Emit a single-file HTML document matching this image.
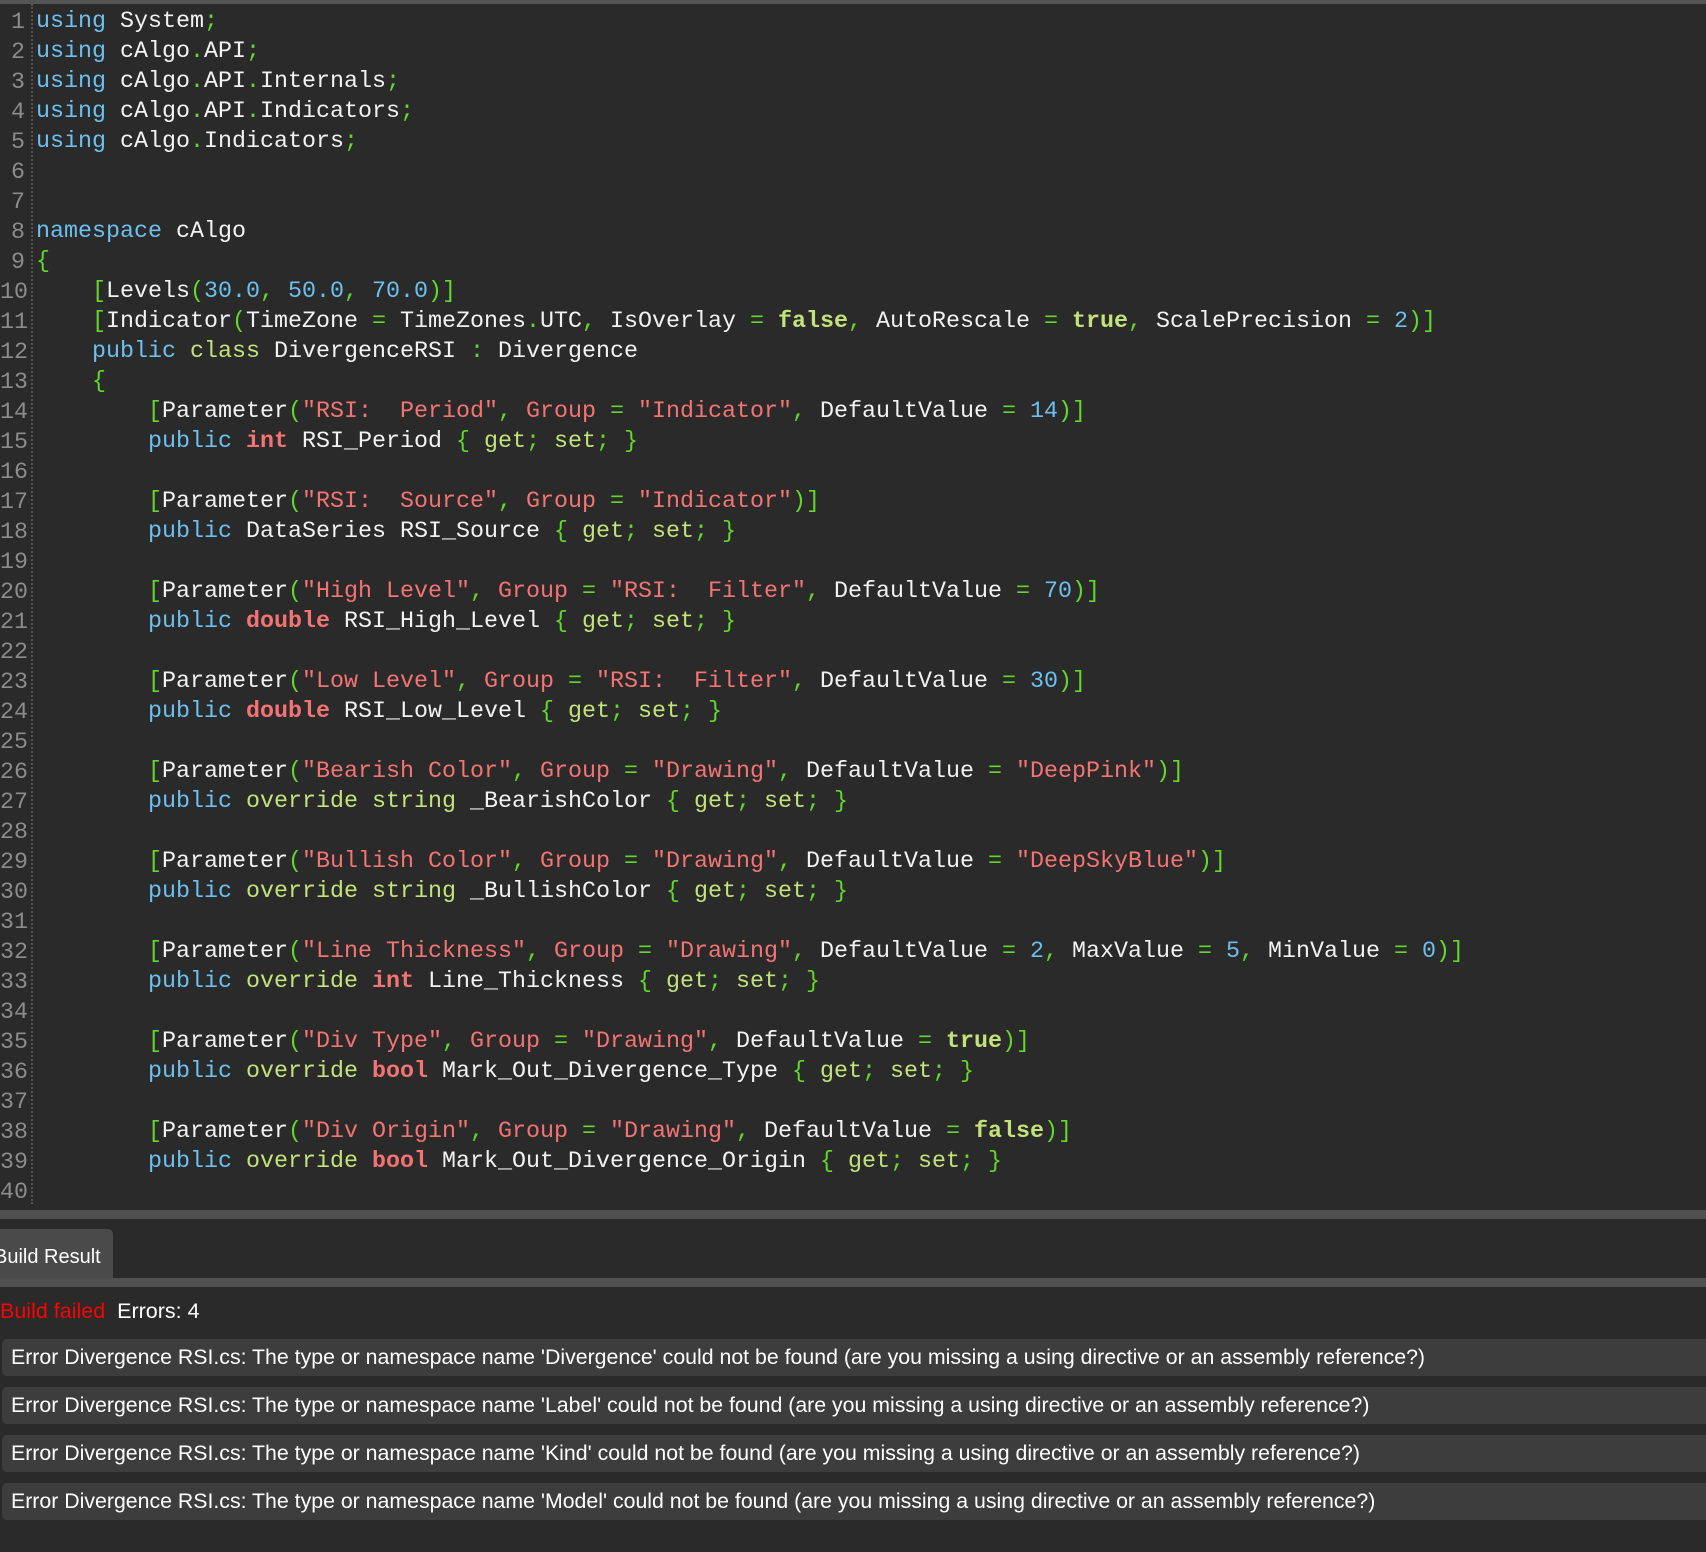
<!DOCTYPE html>
<html><head><meta charset="utf-8"><style>
html,body{margin:0;padding:0}
body{width:1706px;height:1552px;background:#2a2a2a;position:relative;overflow:hidden;font-family:"Liberation Mono",monospace}
.top{position:absolute;left:0;top:0;width:1706px;height:4px;background:#555}
.gut{position:absolute;left:31px;top:4px;height:1200px;border-left:2px dotted #555}
.ln{position:absolute;left:0;width:25px;text-align:right;color:#8c8c8c;font-size:23.3px;height:30px;line-height:30px;white-space:pre;margin-top:2px}
.code{position:absolute;left:36px;top:7px;font-size:23.33px;line-height:30px;color:#f2f2f2;white-space:pre}
.k{color:#6cc0f0}.y{color:#c3e27a}.t{color:#f47373;font-weight:bold}.s{color:#f47373}.n{color:#6cc0f0}.p{color:#62d82a}.b{color:#c3e27a;font-weight:bold}
.bar{position:absolute;left:0;width:1706px;height:9px;background:#505050}
.tab{position:absolute;left:0;top:1229px;width:113px;height:49px;background:#4a4a4a;border-radius:0 5px 0 0;color:#fff;font:20px "Liberation Sans",sans-serif;line-height:56px;text-indent:-6px;white-space:nowrap;overflow:hidden}
.st{position:absolute;left:0;top:1298px;font:21.5px "Liberation Sans",sans-serif;color:#fff;line-height:26px}
.row{position:absolute;left:2px;width:1704px;height:37px;background:#3d3d3d;border-radius:5px 0 0 5px;color:#fff;font:21.3px "Liberation Sans",sans-serif;line-height:37px;text-indent:9px;white-space:pre}
</style></head><body>
<div class="top"></div>
<div class="gut"></div>
<div class="code"><span class="k">using</span> System<span class="p">;</span>
<span class="k">using</span> cAlgo<span class="p">.</span>API<span class="p">;</span>
<span class="k">using</span> cAlgo<span class="p">.</span>API<span class="p">.</span>Internals<span class="p">;</span>
<span class="k">using</span> cAlgo<span class="p">.</span>API<span class="p">.</span>Indicators<span class="p">;</span>
<span class="k">using</span> cAlgo<span class="p">.</span>Indicators<span class="p">;</span>


<span class="k">namespace</span> cAlgo
<span class="p">{</span>
    <span class="p">[</span>Levels<span class="p">(</span><span class="n">30.0</span><span class="p">,</span> <span class="n">50.0</span><span class="p">,</span> <span class="n">70.0</span><span class="p">)]</span>
    <span class="p">[</span>Indicator<span class="p">(</span>TimeZone <span class="p">=</span> TimeZones<span class="p">.</span>UTC<span class="p">,</span> IsOverlay <span class="p">=</span> <span class="b">false</span><span class="p">,</span> AutoRescale <span class="p">=</span> <span class="b">true</span><span class="p">,</span> ScalePrecision <span class="p">=</span> <span class="n">2</span><span class="p">)]</span>
    <span class="k">public</span> <span class="y">class</span> DivergenceRSI <span class="p">:</span> Divergence
    <span class="p">{</span>
        <span class="p">[</span>Parameter<span class="p">(</span><span class="s">"RSI:  Period"</span><span class="p">,</span> <span class="s">Group</span> <span class="p">=</span> <span class="s">"Indicator"</span><span class="p">,</span> DefaultValue <span class="p">=</span> <span class="n">14</span><span class="p">)]</span>
        <span class="k">public</span> <span class="t">int</span> RSI_Period <span class="p">{</span> <span class="y">get</span><span class="p">;</span> <span class="y">set</span><span class="p">;</span> <span class="p">}</span>

        <span class="p">[</span>Parameter<span class="p">(</span><span class="s">"RSI:  Source"</span><span class="p">,</span> <span class="s">Group</span> <span class="p">=</span> <span class="s">"Indicator"</span><span class="p">)]</span>
        <span class="k">public</span> DataSeries RSI_Source <span class="p">{</span> <span class="y">get</span><span class="p">;</span> <span class="y">set</span><span class="p">;</span> <span class="p">}</span>

        <span class="p">[</span>Parameter<span class="p">(</span><span class="s">"High Level"</span><span class="p">,</span> <span class="s">Group</span> <span class="p">=</span> <span class="s">"RSI:  Filter"</span><span class="p">,</span> DefaultValue <span class="p">=</span> <span class="n">70</span><span class="p">)]</span>
        <span class="k">public</span> <span class="t">double</span> RSI_High_Level <span class="p">{</span> <span class="y">get</span><span class="p">;</span> <span class="y">set</span><span class="p">;</span> <span class="p">}</span>

        <span class="p">[</span>Parameter<span class="p">(</span><span class="s">"Low Level"</span><span class="p">,</span> <span class="s">Group</span> <span class="p">=</span> <span class="s">"RSI:  Filter"</span><span class="p">,</span> DefaultValue <span class="p">=</span> <span class="n">30</span><span class="p">)]</span>
        <span class="k">public</span> <span class="t">double</span> RSI_Low_Level <span class="p">{</span> <span class="y">get</span><span class="p">;</span> <span class="y">set</span><span class="p">;</span> <span class="p">}</span>

        <span class="p">[</span>Parameter<span class="p">(</span><span class="s">"Bearish Color"</span><span class="p">,</span> <span class="s">Group</span> <span class="p">=</span> <span class="s">"Drawing"</span><span class="p">,</span> DefaultValue <span class="p">=</span> <span class="s">"DeepPink"</span><span class="p">)]</span>
        <span class="k">public</span> <span class="y">override</span> <span class="y">string</span> _BearishColor <span class="p">{</span> <span class="y">get</span><span class="p">;</span> <span class="y">set</span><span class="p">;</span> <span class="p">}</span>

        <span class="p">[</span>Parameter<span class="p">(</span><span class="s">"Bullish Color"</span><span class="p">,</span> <span class="s">Group</span> <span class="p">=</span> <span class="s">"Drawing"</span><span class="p">,</span> DefaultValue <span class="p">=</span> <span class="s">"DeepSkyBlue"</span><span class="p">)]</span>
        <span class="k">public</span> <span class="y">override</span> <span class="y">string</span> _BullishColor <span class="p">{</span> <span class="y">get</span><span class="p">;</span> <span class="y">set</span><span class="p">;</span> <span class="p">}</span>

        <span class="p">[</span>Parameter<span class="p">(</span><span class="s">"Line Thickness"</span><span class="p">,</span> <span class="s">Group</span> <span class="p">=</span> <span class="s">"Drawing"</span><span class="p">,</span> DefaultValue <span class="p">=</span> <span class="n">2</span><span class="p">,</span> MaxValue <span class="p">=</span> <span class="n">5</span><span class="p">,</span> MinValue <span class="p">=</span> <span class="n">0</span><span class="p">)]</span>
        <span class="k">public</span> <span class="y">override</span> <span class="t">int</span> Line_Thickness <span class="p">{</span> <span class="y">get</span><span class="p">;</span> <span class="y">set</span><span class="p">;</span> <span class="p">}</span>

        <span class="p">[</span>Parameter<span class="p">(</span><span class="s">"Div Type"</span><span class="p">,</span> <span class="s">Group</span> <span class="p">=</span> <span class="s">"Drawing"</span><span class="p">,</span> DefaultValue <span class="p">=</span> <span class="b">true</span><span class="p">)]</span>
        <span class="k">public</span> <span class="y">override</span> <span class="t">bool</span> Mark_Out_Divergence_Type <span class="p">{</span> <span class="y">get</span><span class="p">;</span> <span class="y">set</span><span class="p">;</span> <span class="p">}</span>

        <span class="p">[</span>Parameter<span class="p">(</span><span class="s">"Div Origin"</span><span class="p">,</span> <span class="s">Group</span> <span class="p">=</span> <span class="s">"Drawing"</span><span class="p">,</span> DefaultValue <span class="p">=</span> <span class="b">false</span><span class="p">)]</span>
        <span class="k">public</span> <span class="y">override</span> <span class="t">bool</span> Mark_Out_Divergence_Origin <span class="p">{</span> <span class="y">get</span><span class="p">;</span> <span class="y">set</span><span class="p">;</span> <span class="p">}</span>
</div>
<div class="ln" style="top:5px">1</div><div class="ln" style="top:35px">2</div><div class="ln" style="top:65px">3</div><div class="ln" style="top:95px">4</div><div class="ln" style="top:125px">5</div><div class="ln" style="top:155px">6</div><div class="ln" style="top:185px">7</div><div class="ln" style="top:215px">8</div><div class="ln" style="top:245px">9</div><div class="ln" style="top:275px">10</div><div class="ln" style="top:305px">11</div><div class="ln" style="top:335px">12</div><div class="ln" style="top:365px">13</div><div class="ln" style="top:395px">14</div><div class="ln" style="top:425px">15</div><div class="ln" style="top:455px">16</div><div class="ln" style="top:485px">17</div><div class="ln" style="top:515px">18</div><div class="ln" style="top:545px">19</div><div class="ln" style="top:575px">20</div><div class="ln" style="top:605px">21</div><div class="ln" style="top:635px">22</div><div class="ln" style="top:665px">23</div><div class="ln" style="top:695px">24</div><div class="ln" style="top:725px">25</div><div class="ln" style="top:755px">26</div><div class="ln" style="top:785px">27</div><div class="ln" style="top:815px">28</div><div class="ln" style="top:845px">29</div><div class="ln" style="top:875px">30</div><div class="ln" style="top:905px">31</div><div class="ln" style="top:935px">32</div><div class="ln" style="top:965px">33</div><div class="ln" style="top:995px">34</div><div class="ln" style="top:1025px">35</div><div class="ln" style="top:1055px">36</div><div class="ln" style="top:1085px">37</div><div class="ln" style="top:1115px">38</div><div class="ln" style="top:1145px">39</div><div class="ln" style="top:1175px">40</div>
<div class="bar" style="top:1210px"></div>
<div class="tab">Build Result</div>
<div class="bar" style="top:1278px"></div>
<div class="st"><span style="color:#f00">Build failed</span>&nbsp; Errors: 4</div>
<div class="row" style="top:1339px">Error Divergence RSI.cs: The type or namespace name 'Divergence' could not be found (are you missing a using directive or an assembly reference?)</div>
<div class="row" style="top:1387px">Error Divergence RSI.cs: The type or namespace name 'Label' could not be found (are you missing a using directive or an assembly reference?)</div>
<div class="row" style="top:1435px">Error Divergence RSI.cs: The type or namespace name 'Kind' could not be found (are you missing a using directive or an assembly reference?)</div>
<div class="row" style="top:1483px">Error Divergence RSI.cs: The type or namespace name 'Model' could not be found (are you missing a using directive or an assembly reference?)</div>
</body></html>
